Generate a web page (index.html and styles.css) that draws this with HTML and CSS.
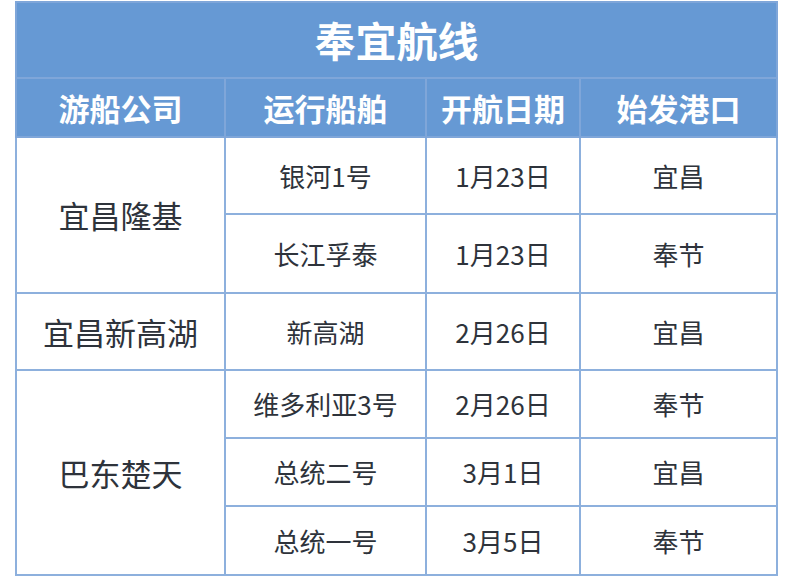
FILE: index.html
```html
<!DOCTYPE html>
<html lang="zh">
<head>
<meta charset="utf-8">
<link rel="stylesheet" href="styles.css">
</head>
<body>
<table class="routes">
  <colgroup>
    <col class="c1"><col class="c2"><col class="c3"><col class="c4">
  </colgroup>
  <thead>
    <tr class="title-row"><th colspan="4" class="title">奉宜航线</th></tr>
    <tr class="head-row"><th>游船公司</th><th>运行船舶</th><th>开航日期</th><th>始发港口</th></tr>
  </thead>
  <tbody>
    <tr class="r77"><td rowspan="2" class="company">宜昌隆基</td><td>银河1号</td><td>1月23日</td><td>宜昌</td></tr>
    <tr class="r79"><td>长江孚泰</td><td>1月23日</td><td>奉节</td></tr>
    <tr class="r77"><td class="company">宜昌新高湖</td><td>新高湖</td><td>2月26日</td><td>宜昌</td></tr>
    <tr class="r68"><td rowspan="3" class="company">巴东楚天</td><td>维多利亚3号</td><td>2月26日</td><td>奉节</td></tr>
    <tr class="r68"><td>总统二号</td><td>3月1日</td><td>宜昌</td></tr>
    <tr class="r69"><td>总统一号</td><td>3月5日</td><td>奉节</td></tr>
  </tbody>
</table>
</body>
</html>
```
FILE: styles.css
```css
html, body {
  margin: 0;
  background: #ffffff;
}
body {
  padding: 1px 0 0 15px;
  font-family: "Noto Sans CJK SC", "Noto Sans", sans-serif;
}
.routes {
  border-collapse: collapse;
  width: 761px;
  table-layout: fixed;
  color: #2e333b;
}
.c1 { width: 209px; }
.c2 { width: 201px; }
.c3 { width: 154px; }
.c4 { width: 197px; }
.routes th,
.routes td {
  border: 2px solid #8db0dd;
  text-align: center;
  vertical-align: middle;
  padding: 0;
  line-height: 1.2;
}
.routes th {
  background: #6699d4;
  color: #ffffff;
  font-weight: 700;
  border-color: #7fa6d9;
}
.title-row { height: 76px; }
.title { font-size: 41px; }
.head-row { height: 59px; }
.head-row th { font-size: 31px; }
.routes td { font-size: 26px; font-weight: 400; }
.routes td.company { font-size: 31px; }
.r77 { height: 77px; }
.r79 { height: 79px; }
.r68 { height: 68px; }
.r69 { height: 69px; }
```
